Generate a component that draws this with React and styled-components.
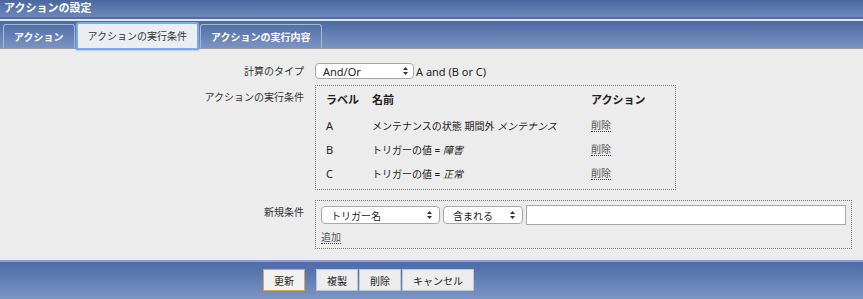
import React from "react";
import styled, { createGlobalStyle } from "styled-components";

const GlobalStyle = createGlobalStyle`
  html, body { margin: 0; padding: 0; }
  body {
    background: #ececec;
    font-family: "Noto Sans", "Noto Sans CJK JP", sans-serif;
    font-size: 10px;
    color: #333;
  }
  * { box-sizing: border-box; }
`;

const Page = styled.div`
  width: 863px;
  height: 299px;
  display: flex;
  flex-direction: column;
  overflow: hidden;
`;

const TitleBar = styled.div`
  height: 19px;
  padding: 0 4px;
  background: linear-gradient(#4a67a1, #6c87b9);
  border-bottom: 2px solid #5a6d96;
  color: #fff;
  font-weight: bold;
  font-size: 11px;
  line-height: 15px;
  font-family: "Noto Sans CJK JP", sans-serif;
`;

const TabBar = styled.div`
  height: 30px;
  display: flex;
  align-items: flex-end;
  gap: 1px;
  padding-left: 3px;
  background: linear-gradient(#4b69a4, #7b94c2);
  border-top: 2px solid #dfe8f4;
  border-bottom: 1px solid #9a9a9a;
`;

const Tab = styled.div`
  height: ${(p) => (p.$active ? "28px" : "24px")};
  margin-bottom: ${(p) => (p.$active ? "-2px" : "0")};
  padding: 0 10px;
  display: flex;
  align-items: center;
  border-radius: 3px 3px 0 0;
  font-family: "Noto Sans CJK JP", sans-serif;
  font-size: 10px;
  white-space: nowrap;
  ${(p) =>
    p.$active
      ? `
    background: #eaedf1;
    color: #333;
    border: 2px solid #7ea7e6;
    box-shadow: 0 0 2px #4f86dc;
    padding-bottom: 2px;
  `
      : `
    color: #fff;
    font-weight: bold;
    border: 1px solid #a6b8da;
    border-bottom: none;
  `}
`;

const Content = styled.div`
  flex: 1;
  padding-top: 14px;
`;

const FormGrid = styled.div`
  display: grid;
  grid-template-columns: 304px auto;
  column-gap: 11px;
  align-items: start;
`;

const Label = styled.div`
  text-align: right;
  font-family: "Noto Sans CJK JP", sans-serif;
  line-height: 12px;
  padding-top: ${(p) => p.$pt || 0}px;
  margin-top: ${(p) => p.$mt || 0}px;
`;

const Field = styled.div`
  display: flex;
  align-items: center;
  gap: 2px;
  margin-top: ${(p) => p.$mt || 0}px;
`;

const SelectBox = styled.div`
  width: ${(p) => p.$w}px;
  height: ${(p) => p.$h || 16}px;
  padding: 0 ${(p) => p.$pr || 5}px 0 ${(p) => p.$pl || 7}px;
  display: flex;
  align-items: center;
  justify-content: space-between;
  background: #fff;
  border: 1px solid #a8a8a8;
  border-radius: 4px;
  font-size: ${(p) => p.$fs || 10}px;
  color: #222;
  flex-shrink: 0;
`;

const Arrows = () => (
  <svg width="5" height="8" viewBox="0 0 5 8">
    <path d="M2.5 0 L5 3 L0 3 Z" fill="#333" />
    <path d="M2.5 8 L5 5 L0 5 Z" fill="#333" />
  </svg>
);

const Formula = styled.span`
  font-size: 11px;
  color: #222;
`;

const DottedBox = styled.div`
  width: ${(p) => p.$w}px;
  border: 1px dotted #777;
  padding: ${(p) => p.$pad};
`;

const CondTable = styled.table`
  border-collapse: collapse;
  font-family: "Noto Sans", "Noto Sans CJK JP", sans-serif;
`;

const HeadCell = styled.th`
  text-align: left;
  font-weight: bold;
  font-size: 11px;
  padding: 0;
  height: 27px;
  vertical-align: top;
  padding-top: 5px;
  width: ${(p) => (p.$w ? `${p.$w}px` : "auto")};
  color: #222;
`;

const Cell = styled.td`
  padding: 0;
  height: 24px;
  vertical-align: middle;
  color: #222;
`;

const Letter = styled.span`
  font-size: 11px;
`;

const Em = styled.i`
  font-style: italic;
`;

const LinkText = styled.span`
  display: inline-block;
  line-height: 12px;
  color: #555;
  border-bottom: 1px dotted #1f3a86;
`;

const Controls = styled.div`
  display: flex;
  align-items: center;
  gap: 3px;
`;

const TextInput = styled.div`
  width: 320px;
  height: 20px;
  background: #fff;
  border: 1px solid #a9a9a9;
`;

const AddRow = styled.div`
  margin-top: 5px;
`;

const Footer = styled.div`
  height: 39px;
  flex-shrink: 0;
  border-top: 2px solid #8fa3c6;
  background: linear-gradient(#4c6aa6, #7c95c3);
  padding: 7px 0 0 263px;
  display: flex;
  align-items: flex-start;
`;

const ButtonGroup = styled.div`
  display: flex;
  gap: 1px;
  margin-left: ${(p) => p.$ml || 0}px;
`;

const Button = styled.div`
  height: 22px;
  padding: 0 10px;
  display: flex;
  align-items: center;
  background: ${(p) => (p.$primary ? "#f4f2ee" : "#ededed")};
  border: 1px solid ${(p) => (p.$primary ? "#d9a762" : "#b9c6de")};
  font-family: "Noto Sans CJK JP", sans-serif;
  font-size: 10px;
  color: #222;
  white-space: nowrap;
`;

const conditions = [
  { label: "A", name: <>メンテナンスの状態 期間外 <Em>メンテナンス</Em></> },
  { label: "B", name: <>トリガーの値 = <Em>障害</Em></> },
  { label: "C", name: <>トリガーの値 = <Em>正常</Em></> },
];

export default function App() {
  return (
    <>
      <GlobalStyle />
      <Page>
        <TitleBar>アクションの設定</TitleBar>
        <TabBar>
          <Tab>アクション</Tab>
          <Tab $active>アクションの実行条件</Tab>
          <Tab>アクションの実行内容</Tab>
        </TabBar>
        <Content>
          <FormGrid>
            <Label $pt={2}>計算のタイプ</Label>
            <Field>
              <SelectBox $w={99} $fs={11}>
                <span>And/Or</span>
                <Arrows />
              </SelectBox>
              <Formula>A and (B or C)</Formula>
            </Field>

            <Label $mt={6} $pt={6}>アクションの実行条件</Label>
            <Field $mt={6}>
              <DottedBox $w={361} $pad="0 0 4px 10px">
                <CondTable>
                  <thead>
                    <tr>
                      <HeadCell $w={46}>ラベル</HeadCell>
                      <HeadCell $w={219}>名前</HeadCell>
                      <HeadCell>アクション</HeadCell>
                    </tr>
                  </thead>
                  <tbody>
                    {conditions.map((c) => (
                      <tr key={c.label}>
                        <Cell>
                          <Letter>{c.label}</Letter>
                        </Cell>
                        <Cell>{c.name}</Cell>
                        <Cell>
                          <LinkText>削除</LinkText>
                        </Cell>
                      </tr>
                    ))}
                  </tbody>
                </CondTable>
              </DottedBox>
            </Field>

            <Label $mt={10} $pt={6}>新規条件</Label>
            <Field $mt={10}>
              <DottedBox $w={537} $pad="4px 5px 4px 5px">
                <Controls>
                  <SelectBox $w={119} $h={18} $pl={9} $pr={7}>
                    <span>トリガー名</span>
                    <Arrows />
                  </SelectBox>
                  <SelectBox $w={80} $h={18} $pl={9} $pr={7}>
                    <span>含まれる</span>
                    <Arrows />
                  </SelectBox>
                  <TextInput />
                </Controls>
                <AddRow>
                  <LinkText>追加</LinkText>
                </AddRow>
              </DottedBox>
            </Field>
          </FormGrid>
        </Content>
        <Footer>
          <ButtonGroup>
            <Button $primary>更新</Button>
          </ButtonGroup>
          <ButtonGroup $ml={11}>
            <Button>複製</Button>
            <Button>削除</Button>
            <Button>キャンセル</Button>
          </ButtonGroup>
        </Footer>
      </Page>
    </>
  );
}
